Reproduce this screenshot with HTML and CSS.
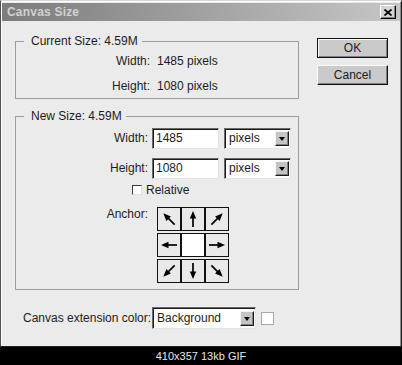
FILE: index.html
```html
<!DOCTYPE html>
<html>
<head>
  <title>Canvas Size</title>
  <link rel="stylesheet" href="styles.css">
</head>
<body>
  <svg class="defs" width="0" height="0">
    <defs>
      <g id="arrow">
        <line x1="11" y1="19" x2="11" y2="8" stroke="#000" stroke-width="1.7" />
        <polygon points="11,3 7.8,10.5 14.2,10.5" fill="#000" />
      </g>
    </defs>
  </svg>

  <div class="dialog">
    <div class="titlebar">
      <span class="title">Canvas Size</span>
      <span class="close-btn">
        <svg width="8" height="7" viewBox="0 0 8 7">
          <path d="M0.5 0.5 L7.5 6.5 M7.5 0.5 L0.5 6.5" stroke="#000" stroke-width="1.7" />
        </svg>
      </span>
    </div>

    <div class="dialog-body">
      <div class="main">
        <div class="groups">
          <fieldset class="group current">
            <legend>Current Size: 4.59M</legend>
            <div class="info-row"><span class="label">Width:</span><span>1485 pixels</span></div>
            <div class="info-row"><span class="label">Height:</span><span>1080 pixels</span></div>
          </fieldset>

          <fieldset class="group new">
            <legend>New Size: 4.59M</legend>
            <div class="field-row">
              <span class="label">Width:</span>
              <input class="num" type="text" value="1485">
              <div class="combo unit"><span class="combo-text">pixels</span><span class="combo-btn"><span class="tri"></span></span></div>
            </div>
            <div class="field-row">
              <span class="label">Height:</span>
              <input class="num" type="text" value="1080">
              <div class="combo unit"><span class="combo-text">pixels</span><span class="combo-btn"><span class="tri"></span></span></div>
            </div>
            <div class="check-row"><span class="checkbox"></span>Relative</div>
            <div class="anchor-row">
              <span class="label">Anchor:</span>
              <div class="anchor-grid">
                <span class="cell"><svg width="22" height="22"><use href="#arrow" transform="rotate(-45 11 11)" /></svg></span>
                <span class="cell"><svg width="22" height="22"><use href="#arrow" /></svg></span>
                <span class="cell"><svg width="22" height="22"><use href="#arrow" transform="rotate(45 11 11)" /></svg></span>
                <span class="cell"><svg width="22" height="22"><use href="#arrow" transform="rotate(-90 11 11)" /></svg></span>
                <span class="cell center"></span>
                <span class="cell"><svg width="22" height="22"><use href="#arrow" transform="rotate(90 11 11)" /></svg></span>
                <span class="cell"><svg width="22" height="22"><use href="#arrow" transform="rotate(-135 11 11)" /></svg></span>
                <span class="cell"><svg width="22" height="22"><use href="#arrow" transform="rotate(180 11 11)" /></svg></span>
                <span class="cell"><svg width="22" height="22"><use href="#arrow" transform="rotate(135 11 11)" /></svg></span>
              </div>
            </div>
          </fieldset>
        </div>

        <div class="buttons">
          <button class="btn default">OK</button>
          <button class="btn">Cancel</button>
        </div>
      </div>

      <div class="ext-row">
        <span class="ext-label">Canvas extension color:</span>
        <div class="combo ext"><span class="combo-text">Background</span><span class="combo-btn"><span class="tri"></span></span></div>
        <span class="swatch"></span>
      </div>
    </div>
  </div>

  <div class="caption">410x357 13kb GIF</div>
</body>
</html>
```

FILE: styles.css
```css
body {
  margin: 0;
  background-color: #000;
  font-family: "Liberation Sans", Arial, sans-serif;
  font-size: 12px;
  color: #1c1c1c;
}

.defs {
  position: absolute;
}

.dialog {
  box-sizing: border-box;
  width: 402px;
  height: 347px;
  padding: 2px 1px 0 1px;
  background-color: #ebebeb;
  border: 1px solid;
  border-color: #d6d6d6 #202020 #202020 #505050;
  box-shadow: inset 1px 1px 0 #fff, inset -1px 0 0 #8a8a8a;
}

/* Title bar */
.titlebar {
  height: 18px;
  display: flex;
  align-items: center;
  justify-content: space-between;
  padding: 0 4px 0 5px;
  background: linear-gradient(to right, #7c7c7c, #c6c6c6);
}

.title {
  font-weight: bold;
  color: #d2d2d2;
  letter-spacing: 0.2px;
}

.close-btn {
  box-sizing: border-box;
  width: 16px;
  height: 14px;
  display: flex;
  align-items: center;
  justify-content: center;
  background-color: #d4d4d4;
  border: 1px solid;
  border-color: #fff #000 #000 #fff;
  box-shadow: inset -1px -1px 0 #808080;
}

/* Layout */
.main {
  display: flex;
  align-items: flex-start;
}

.groups {
  margin-left: 13px;
  width: 284px;
}

.group {
  box-sizing: border-box;
  width: 284px;
  margin: 0;
  padding: 0;
  border: 1px solid #9c9c9c;
  min-inline-size: 0;
}

.group legend {
  margin-left: 8px;
  padding: 0 4px 0 7px;
  line-height: 14px;
}

.current {
  margin-top: 13px;
}

.new {
  margin-top: 10px;
  padding-bottom: 6px;
}

.label {
  text-align: right;
}

.info-row {
  height: 25px;
  display: flex;
  align-items: center;
}

.info-row .label {
  width: 134px;
  margin-right: 7px;
}

.field-row {
  height: 30px;
  display: flex;
  align-items: center;
}

.field-row .label {
  width: 132px;
  margin-right: 4px;
}

.num {
  box-sizing: border-box;
  width: 67px;
  height: 21px;
  margin: 0 5px 0 0;
  padding: 0 3px;
  font-family: inherit;
  font-size: 12px;
  color: #1c1c1c;
  background-color: #fff;
  border: 1px solid;
  border-color: #6a6a6a #e4e4e4 #e4e4e4 #6a6a6a;
  box-shadow: inset 1px 1px 0 #1a1a1a;
  outline: none;
}

/* Drop-down */
.combo {
  box-sizing: border-box;
  height: 21px;
  display: flex;
  align-items: center;
  background-color: #fff;
  border: 1px solid;
  border-color: #6a6a6a #e4e4e4 #e4e4e4 #6a6a6a;
  box-shadow: inset 1px 1px 0 #1a1a1a;
}

.combo.unit {
  width: 67px;
}

.combo.ext {
  width: 104px;
  height: 22px;
}

.combo-text {
  flex: 1;
  padding-left: 4px;
}

.combo-btn {
  box-sizing: border-box;
  width: 14px;
  height: 15px;
  margin: 1px 1px 0 0;
  display: flex;
  align-items: center;
  justify-content: center;
  background-color: #c4c4c4;
  border: 1px solid;
  border-color: #f4f4f4 #1a1a1a #1a1a1a #f4f4f4;
  box-shadow: inset -1px -1px 0 #808080;
}

.tri {
  width: 0;
  height: 0;
  border-left: 3.5px solid transparent;
  border-right: 3.5px solid transparent;
  border-top: 4px solid #000;
}

.check-row {
  height: 14px;
  display: flex;
  align-items: center;
  padding-left: 116px;
}

.checkbox {
  box-sizing: border-box;
  width: 10px;
  height: 10px;
  margin-right: 4px;
  background-color: #fff;
  border: 1px solid;
  border-color: #3a3a3a #e0e0e0 #e0e0e0 #3a3a3a;
}

/* Anchor */
.anchor-row {
  display: flex;
  align-items: flex-start;
  margin-top: 10px;
}

.anchor-row .label {
  width: 132px;
  margin-right: 9px;
  line-height: 14px;
}

.anchor-grid {
  display: grid;
  grid-template-columns: 24px 24px 24px;
  grid-template-rows: 24px 24px 24px;
  row-gap: 2px;
}

.cell {
  box-sizing: border-box;
  border: 1px solid #111;
  background-color: #e9e9e9;
  display: flex;
}

.cell.center {
  background-color: #fff;
}

/* Buttons */
.buttons {
  display: flex;
  flex-direction: column;
  gap: 7px;
  margin: 17px 0 0 18px;
}

.btn {
  box-sizing: border-box;
  width: 71px;
  height: 20px;
  padding: 0;
  font-family: inherit;
  font-size: 12px;
  color: #1c1c1c;
  background-color: #cacaca;
  border: 1px solid;
  border-color: #fafafa #111 #111 #fafafa;
  box-shadow: inset -1px -1px 0 #808080;
}

.btn.default {
  border-color: #111;
  box-shadow: inset 1px 1px 0 #fafafa, inset -1px -1px 0 #808080;
}

/* Extension color row */
.ext-row {
  display: flex;
  align-items: center;
  margin-top: 17px;
  padding-left: 21px;
}

.ext-label {
  width: 129px;
}

.swatch {
  box-sizing: border-box;
  width: 13px;
  height: 13px;
  margin-left: 5px;
  background-color: #fff;
  border: 1px solid #a8a8a8;
}

.caption {
  height: 18px;
  line-height: 18px;
  text-align: center;
  font-size: 11px;
  color: #e6e6e6;
}
```
